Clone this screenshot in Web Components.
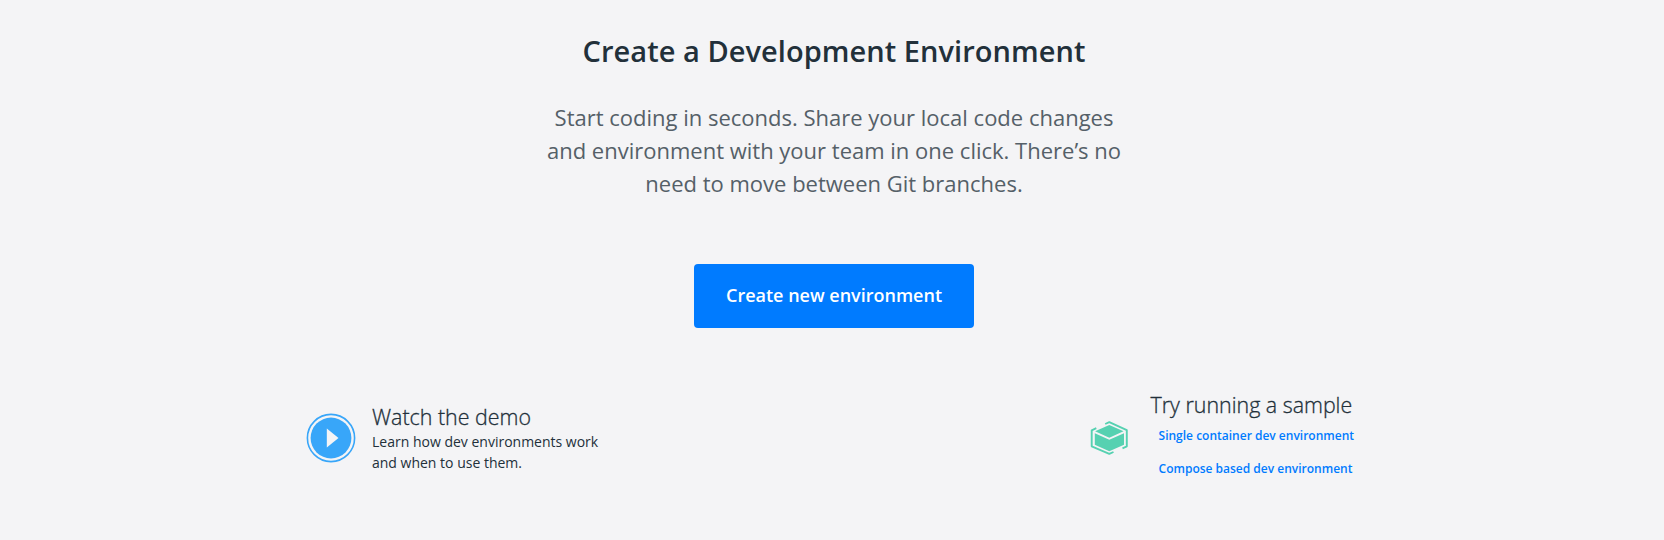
<!DOCTYPE html>
<html lang="en"><head><meta charset="utf-8"><title>Dev Environments</title>
<style>body{margin:0;background:#f4f4f6;font-family:"Open Sans",sans-serif}</style></head><body>
<dev-environments></dev-environments>
<script>
const define=(name,html)=>customElements.define(name,class extends HTMLElement{constructor(){super();this.attachShadow({mode:'open'}).innerHTML=html}});
define('primary-button',`<style>:host{display:block}button{display:block;width:280px;height:64px;border:0;border-radius:4px;background:#007bff;color:#fff;font:600 18px "Open Sans",sans-serif;padding:0 0 2px}</style><button><slot></slot></button>`);
define('play-icon',`<style>:host{display:block;width:50px;height:50px}svg{display:block}</style><svg width="50" height="50" viewBox="0 0 50 50"><circle cx="25" cy="25" r="23.6" fill="none" stroke="#38a6f9" stroke-width="1.6"/><circle cx="25" cy="25" r="20.4" fill="#38a6f9"/><path d="M20.8 15.5L32.5 25L20.8 34.5Z" fill="#f4f4f6"/></svg>`);
define('box-icon',`<style>:host{display:block;width:40px;height:36px}svg{display:block}</style><svg width="40" height="36" viewBox="0 0 40 36"><g fill="#56d1b1"><path d="M20.3 5L34.5 11.2L20.3 17.7L6.1 11.2Z"/><path d="M5.8 13.2L20.3 19.8L35 13.2V24.7L20.3 31.3L5.8 24.7Z"/></g><path d="M16.2 4L20.3 2.2L37.8 10.2V26.3L33.5 28.3M7.3 8.2L2.7 10.3V26.3L20.3 33.8L24.5 32" fill="none" stroke="#56d1b1" stroke-width="1.9" stroke-linejoin="round"/></svg>`);
define('hero-intro',`<style>:host{display:block;text-align:center}h1{margin:0;font-size:29px;line-height:40px;font-weight:600;letter-spacing:.05px;color:#22303a}p{margin:30px auto 0;width:600px;font-size:22px;line-height:33px;color:#556068}</style><h1><slot name="title"></slot></h1><p><slot></slot></p>`);
define('help-card',`<style>:host{display:flex;align-items:center;color:#22303a}.body{margin-left:16px}h2{margin:0;font-size:21.4px;line-height:28px;font-weight:300;-webkit-text-stroke:.3px #22303a}</style><slot name="icon"></slot><div class="body"><h2><slot name="title"></slot></h2><slot></slot></div>`);
define('dev-environments',`<style>:host{display:block;height:504px;padding-top:31px}hero-intro{margin-left:4px}primary-button{width:280px;margin:64px 0 0 694px}footer{display:flex;justify-content:space-between;margin:63px 310px 0 306px}.d{font-size:14px;line-height:21px}box-icon{margin-right:6px}.l{display:block;font-size:12px;font-weight:600;color:#007bff;margin-left:8px;line-height:33px}</style>
<hero-intro><span slot="title">Create a Development Environment</span>Start coding in seconds. Share your local code changes<br>and environment with your team in one click. There’s no<br>need to move between Git branches.</hero-intro><primary-button>Create new environment</primary-button>
<footer><help-card><play-icon slot="icon"></play-icon><span slot="title">Watch the demo</span><div class="d">Learn how dev environments work<br>and when to use them.</div></help-card><help-card><box-icon slot="icon"></box-icon><span slot="title">Try running a sample</span><a class="l">Single container dev environment</a><a class="l">Compose based dev environment</a></help-card></footer>`);
</script></body></html>
